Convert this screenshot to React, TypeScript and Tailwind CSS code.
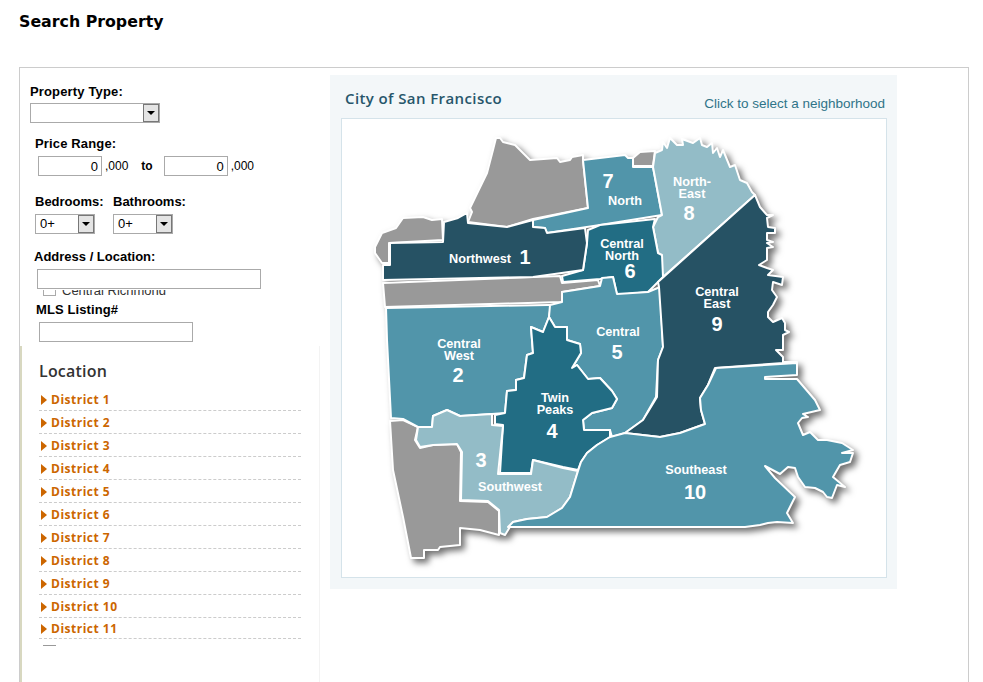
import React from 'react';

const districts = ['District 1', 'District 2', 'District 3', 'District 4', 'District 5', 'District 6', 'District 7', 'District 8', 'District 9', 'District 10', 'District 11'];

const DARK = '#265264';
const MID = '#5195aa';
const DEEP = '#226d84';
const LIGHT = '#93bcc7';
const GRAY = '#999999';

// map shapes, in page coordinates (the svg viewBox starts at the frame corner)
const regions: { fill: string; points: string }[] = [
  { fill: GRAY, points: '496,138 500,138 503,142 515,145 530,160 557,158 560,162 570,160 572,157 583,155 583,160 588,208 533,219 507,227 468,222 472,212 470,208 487,173 493,150' },
  { fill: GRAY, points: '633,158 640,152 655,151 653,166 633,166' },
  { fill: GRAY, points: '375,247 382,233 396,228 403,218 423,217 432,220 442,219 443,240 389,243 389,263 382,263 375,253' },
  { fill: GRAY, points: '383,283 560,276 562,283 598,280 600,286 562,292 562,302 385,307' },
  { fill: GRAY, points: '390,421 403,420 418,427 415,440 420,448 433,445 457,444 461,452 460,501 488,502 499,511 499,535 480,530 460,528 460,545 440,547 438,550 424,550 424,558 411,558 403,517 393,470' },
  { fill: MID, points: '583,160 625,155 628,158 633,158 633,167 653,167 662,215 600,225 547,233 545,228 533,227 533,220 588,208' },
  { fill: LIGHT, points: '655,153 662,150 663,142 667,148 670,138 677,145 683,145 682,139 693,143 700,138 702,145 707,147 712,143 713,153 717,148 720,157 723,150 730,167 735,165 740,180 747,183 752,192 755,195 663,277 658,253 653,227 658,217 662,215 653,167' },
  { fill: DEEP, points: '655,219 653,227 658,253 662,255 663,277 648,292 617,295 613,277 600,279 563,282 562,276 583,270 587,243 588,230 600,225' },
  { fill: DARK, points: '383,280 383,265 390,265 390,243 443,242 444,222 458,218 467,213 468,223 507,227 533,220 533,227 545,228 547,233 585,228 587,243 583,270 533,277' },
  { fill: MID, points: '386,308 548,305 551,305 549,317 543,332 531,327 533,353 527,355 524,378 516,380 516,390 507,391 505,413 492,414 460,416 447,410 433,416 432,427 418,427 403,419 391,418 387,340' },
  { fill: MID, points: '550,305 562,302 562,292 600,286 602,278 613,277 617,294 648,292 660,287 663,347 658,360 656,397 643,420 625,433 612,437 610,430 584,430 583,420 592,413 612,408 617,399 612,391 600,378 588,379 577,365 572,368 581,353 580,344 567,340 567,327 555,327 549,317' },
  { fill: DEEP, points: '549,317 555,327 567,327 567,340 580,344 581,353 572,368 577,365 588,379 600,378 612,391 617,399 612,408 592,413 583,420 584,430 610,430 610,437 597,445 587,453 581,462 578,470 563,467 533,460 531,473 500,473 503,425 495,424 495,415 505,413 507,391 516,390 516,380 524,378 527,355 533,353 531,327 543,332' },
  { fill: LIGHT, points: '432,427 433,416 447,410 460,416 492,414 492,425 503,426 498,474 531,474 533,460 563,468 578,471 570,497 562,508 547,517 527,519 513,522 505,535 500,533 499,510 488,501 461,500 462,452 457,444 433,445 420,447 416,440 418,427' },
  { fill: DARK, points: '755,195 760,207 767,215 773,215 767,218 768,227 775,228 775,233 767,233 767,240 773,242 767,243 773,247 767,248 767,260 759,265 767,268 773,270 768,275 783,277 782,285 773,282 772,290 777,297 773,305 768,312 768,317 773,322 782,318 785,323 785,330 789,332 783,335 783,350 776,350 783,357 783,362 797,362 715,368 708,385 700,398 701,410 705,424 680,433 660,437 625,433 643,420 657,397 658,360 663,347 659,287 658,282' },
  { fill: MID, points: '716,368 797,363 797,375 765,377 765,379 797,379 815,400 820,410 803,414 808,417 802,418 798,423 803,435 810,432 818,440 827,440 842,443 853,450 842,453 853,453 850,462 840,465 833,477 845,487 837,485 832,498 827,497 823,492 815,488 805,487 798,477 795,468 788,467 780,474 765,466 775,478 795,497 787,513 793,523 777,522 768,523 760,525 745,527 630,527 508,527 513,522 527,519 547,517 562,508 570,497 578,471 581,462 587,453 597,445 610,437 625,433 660,437 680,433 705,424 701,410 700,398 708,385' },
];

const labels: { x: number; y: number; lines: string[]; size?: number }[] = [
  { x: 480, y: 263, lines: ['Northwest'] },
  { x: 525, y: 264, lines: ['1'], size: 20 },
  { x: 608, y: 188, lines: ['7'], size: 20 },
  { x: 625, y: 205, lines: ['North'] },
  { x: 692, y: 186, lines: ['North-', 'East'] },
  { x: 689, y: 220, lines: ['8'], size: 20 },
  { x: 622, y: 248, lines: ['Central', 'North'] },
  { x: 630, y: 278, lines: ['6'], size: 20 },
  { x: 717, y: 296, lines: ['Central', 'East'] },
  { x: 717, y: 331, lines: ['9'], size: 20 },
  { x: 459, y: 348, lines: ['Central', 'West'] },
  { x: 458, y: 382, lines: ['2'], size: 20 },
  { x: 618, y: 336, lines: ['Central'] },
  { x: 617, y: 359, lines: ['5'], size: 20 },
  { x: 555, y: 402, lines: ['Twin', 'Peaks'] },
  { x: 552, y: 438, lines: ['4'], size: 20 },
  { x: 481, y: 467, lines: ['3'], size: 20 },
  { x: 510, y: 491, lines: ['Southwest'] },
  { x: 696, y: 474, lines: ['Southeast'] },
  { x: 695, y: 499, lines: ['10'], size: 20 },
];

const SelectBox = ({ width, value }: { width: string; value?: string }) => (
  <div className={`${width} flex h-5 items-center justify-between border border-[#aaaaaa] bg-white pl-[4px] text-[13px] font-normal text-black`}>
    <span>{value}</span>
    <span className="flex h-[18px] w-[16px] items-center justify-center border border-[#777777] bg-[#e4e4e4]">
      <span className="h-0 w-0 border-x-[4px] border-t-[4px] border-x-transparent border-t-black" />
    </span>
  </div>
);

const TextBox = ({ width, value }: { width: string; value?: string }) => (
  <input
    readOnly
    value={value ?? ''}
    className={`${width} h-5 border border-[#aaaaaa] bg-white px-[3px] text-right text-[13px] text-black outline-none`}
  />
);

const SearchForm = () => (
  <div className="h-[278px] text-[13px] font-bold leading-4 text-black">
    <div className="ml-[10px] pt-[16px] tracking-[0.15px]">Property Type:</div>
    <div className="ml-[10px] mt-[3px]">
      <SelectBox width="w-[130px]" />
    </div>
    <div className="ml-[15px] mt-[13px] tracking-[0.15px]">Price Range:</div>
    <div className="ml-[18px] mt-[4px] flex items-center text-[12px] font-normal">
      <TextBox width="w-[64px]" value="0" />
      <span className="ml-[3px]">,000</span>
      <span className="ml-[13px] font-bold">to</span>
      <span className="ml-[11px]">
        <TextBox width="w-[64px]" value="0" />
      </span>
      <span className="ml-[3px]">,000</span>
    </div>
    <div className="ml-[15px] mt-[18px] flex">
      <div className="w-[78px]">
        <div>Bedrooms:</div>
        <div className="mt-[4px]">
          <SelectBox width="w-[60px]" value="0+" />
        </div>
      </div>
      <div>
        <div>Bathrooms:</div>
        <div className="mt-[4px]">
          <SelectBox width="w-[60px]" value="0+" />
        </div>
      </div>
    </div>
    <div className="ml-[14px] mt-[15px]">Address / Location:</div>
    <div className="ml-[17px] mt-[4px] flex">
      <TextBox width="w-[224px]" />
    </div>
    {/* the checkbox list behind the form, cut off by the box */}
    <div className="ml-[23px] mt-[1px] h-[7px] overflow-hidden">
      <div className="-mt-[7px] flex items-end text-[13px] font-normal text-[#333333]">
        <span className="mb-[3px] h-[13px] w-[13px] border border-[#aaaaaa]" />
        <span className="ml-[6px]">Central Richmond</span>
      </div>
    </div>
    <div className="ml-[16px] mt-[5px] tracking-[0.1px]">MLS Listing#</div>
    <div className="ml-[19px] mt-[4px] flex">
      <TextBox width="w-[154px]" />
    </div>
  </div>
);

const LocationList = () => (
  <div className="h-[340px] border-l-2 border-r border-l-[#d8d8c0] border-r-[#f3f3f3] bg-white pl-[17px] pr-[18px] pt-[15px]">
    <h3 className="font-['Open_Sans',sans-serif] text-[16px] font-semibold leading-5 tracking-[0.2px] text-[#333333]">Location</h3>
    <ul className="mt-[7px]">
      {districts.map(name => (
        <li key={name} className="flex h-[23px] items-center border-b border-dashed border-[#cccccc] pt-[2px] last:h-[21px]">
          <span className="ml-[2px] h-0 w-0 border-y-[5px] border-l-[6px] border-y-transparent border-l-[#cc6600]" />
          <span className="ml-[4px] font-['Open_Sans',sans-serif] text-[12px] font-bold tracking-[0.5px] text-[#cc6600]">{name}</span>
        </li>
      ))}
    </ul>
    <div className="ml-[4px] mt-[6px] h-px w-[13px] bg-[#999999]" />
  </div>
);

const CityMap = () => (
  <svg viewBox="342 119 544 458" className="block h-[458px] w-[544px]">
    <g className="drop-shadow-[4px_4px_3px_rgba(0,0,0,0.55)]">
      {regions.map((region, i) => (
        <polygon key={i} points={region.points} fill={region.fill} stroke="#ffffff" strokeWidth={2} strokeLinejoin="round" />
      ))}
    </g>
    {labels.map(label => (
      <text
        key={label.lines[0] + label.x}
        y={label.y}
        textAnchor="middle"
        fill="#ffffff"
        fontFamily="'Liberation Sans', sans-serif"
        fontWeight={700}
        fontSize={label.size ?? 12.7}
      >
        {label.lines.map((line, i) => (
          <tspan key={line} x={label.x} dy={i === 0 ? 0 : 11.5}>
            {line}
          </tspan>
        ))}
      </text>
    ))}
  </svg>
);

const App: React.FC = () => (
  <div className="h-[682px] w-[983px] overflow-hidden bg-white font-['Liberation_Sans',Arial,sans-serif]">
    <h1 className="pl-[19px] pt-[12px] font-['DejaVu_Sans',Verdana,sans-serif] text-[15.8px] font-bold leading-5 text-black">Search Property</h1>
    <div className="ml-[19px] mt-[35px] flex h-[700px] w-[950px] border border-[#cccccc]">
      <div className="w-[300px] shrink-0">
        <SearchForm />
        <LocationList />
      </div>
      <div className="ml-[10px] mt-[7px] h-[514px] w-[567px] bg-[#f3f7f9] pl-[11px] pr-[10px]">
        <div className="flex h-[43px] items-end justify-between pb-[4px] pr-[2px]">
          <span className="mb-[5px] ml-[4px] font-['Open_Sans',sans-serif] text-[15px] font-semibold tracking-[0.4px] text-[#27566b]">City of San Francisco</span>
          <span className="text-[13.5px] text-[#2f7488]">Click to select a neighborhood</span>
        </div>
        <div className="w-[546px] border border-[#d5e3ea] bg-white">
          <CityMap />
        </div>
      </div>
    </div>
  </div>
);

export default App;
